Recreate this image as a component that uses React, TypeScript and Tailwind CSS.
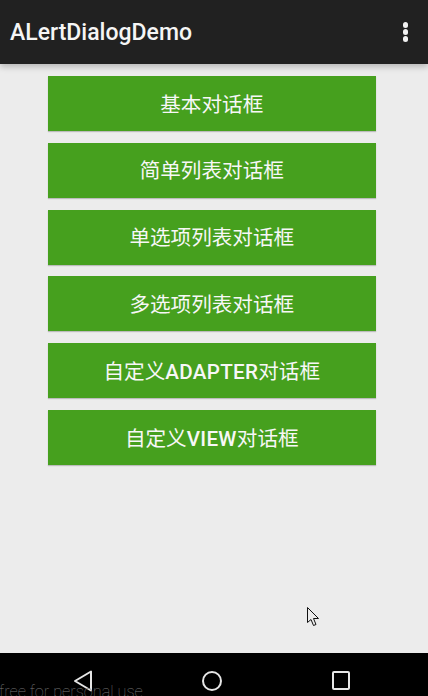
const labels: [string, string, string][] = [
  ["基本对话框", "", ""],
  ["简单列表对话框", "", ""],
  ["单选项列表对话框", "", ""],
  ["多选项列表对话框", "", ""],
  ["自定义", "ADAPTER", "对话框"],
  ["自定义", "VIEW", "对话框"],
];

export default function App() {
  return (
    <div className="relative flex h-[696px] w-[428px] flex-col overflow-hidden bg-[#ececec] font-['Roboto','Noto_Sans_CJK_SC',sans-serif]">
      <header className="z-10 flex h-16 shrink-0 items-center justify-between bg-[#212121] pl-[10px] pr-[20px] shadow-[0_3px_6px_rgba(0,0,0,0.22)]">
        <h1 className="pt-[3px] text-[23px] font-medium text-[#f5f5f5]">ALertDialogDemo</h1>
        <div className="flex flex-col gap-[1.5px]">
          <span className="size-[5.5px] rounded-full bg-[#f2f2f2]" />
          <span className="size-[5.5px] rounded-full bg-[#f2f2f2]" />
          <span className="size-[5.5px] rounded-full bg-[#f2f2f2]" />
        </div>
      </header>
      <main className="flex flex-1 flex-col items-start gap-[11.8px] pl-[48px] pt-3">
        {labels.map(([a, b, c]) => (
          <button key={a + b} className="flex h-[55px] w-[327.5px] items-center justify-center bg-[#46a01e] pt-[3px] text-[20.6px] font-normal text-[#f7f7f7] shadow-[0_1px_1px_rgba(0,0,0,0.2)]">
            {a}
            {b && <span className="font-medium tracking-[0.3px]">{b}</span>}
            {c}
          </button>
        ))}
      </main>
      <nav className="flex h-[43px] shrink-0 items-start bg-black pl-[73px] pt-[17px]">
        <svg width="20" height="22" viewBox="0 0 20 22" fill="none" stroke="#e6e6e6" strokeWidth="2"><path d="M18 1.5V20.5L2 11Z" strokeLinejoin="round" /></svg>
        <svg className="ml-[109px] mt-[1px]" width="20" height="20" viewBox="0 0 20 20" fill="none" stroke="#e6e6e6" strokeWidth="2"><circle cx="10" cy="10" r="9" /></svg>
        <svg className="ml-[110px] mt-[1px]" width="18" height="19" viewBox="0 0 18 19" fill="none" stroke="#e6e6e6" strokeWidth="2"><rect x="1" y="1" width="16" height="17" rx="1" /></svg>
      </nav>
      <span className="absolute left-[-1px] top-[680px] text-[16.3px] font-thin text-[#777]">free for personal use</span>
      <svg className="absolute left-[307px] top-[607px]" width="13" height="20" viewBox="0 0 13 20" fill="#ececec" stroke="#111" strokeWidth="1"><path d="M0.5 0.5V15.5L4 12.5L6.5 18.5L9 17.5L6.5 11.5H11.5Z" /></svg>
    </div>
  );
}
